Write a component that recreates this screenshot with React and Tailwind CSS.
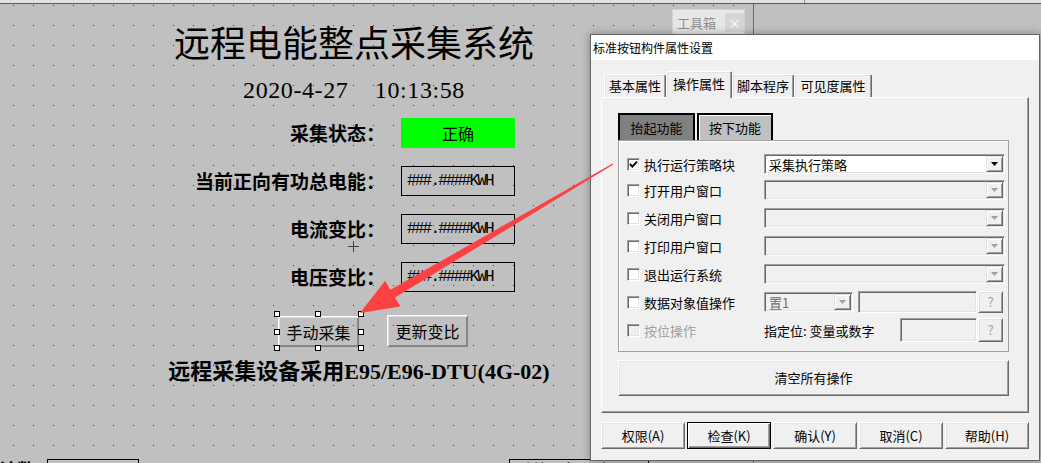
import React from "react";

const raised =
  "border border-t-white border-l-white border-r-[#696969] border-b-[#696969] shadow-[inset_1px_1px_0_#e3e3e3,inset_-1px_-1px_0_#a0a0a0]";
const sunken =
  "border border-t-[#a0a0a0] border-l-[#a0a0a0] border-r-white border-b-white shadow-[inset_1px_1px_0_#696969,inset_-1px_-1px_0_#e3e3e3]";
const dropRaised =
  "border border-t-[#e3e3e3] border-l-[#e3e3e3] border-r-[#696969] border-b-[#696969] shadow-[inset_1px_1px_0_#fff,inset_-1px_-1px_0_#a0a0a0]";
const canvasBtn =
  "border border-t-white border-l-white border-r-[#808080] border-b-[#808080] shadow-[inset_1px_1px_0_#dfdfdf,inset_-1px_-1px_0_#8a8a8a]";

function Dots() {
  return (
    <svg className="absolute inset-0 w-full h-full" aria-hidden="true">
      <defs>
        <pattern id="dotgrid" x="13" y="1" width="20" height="20" patternUnits="userSpaceOnUse">
          <rect x="0" y="0" width="1" height="1" fill="#3a3a3a" />
        </pattern>
      </defs>
      <rect width="100%" height="100%" fill="url(#dotgrid)" />
    </svg>
  );
}

function FormRow({ label, children }) {
  return (
    <div className="flex items-center h-[30px]">
      <div className="w-[385px] text-right text-[19px] font-bold leading-[30px] whitespace-nowrap">{label}</div>
      <div className="ml-[16px]">{children}</div>
    </div>
  );
}

function ValBox() {
  return (
    <div className="w-[114px] h-[30px] border border-black flex items-center pl-[5px] font-['Liberation_Mono',monospace] text-[16px] tracking-[-1.8px] whitespace-nowrap">
      ###.####KWH
    </div>
  );
}

function Handle({ pos }) {
  return <div className={"absolute w-[6px] h-[6px] bg-white border border-black " + pos} />;
}

function Canvas() {
  return (
    <div className="relative w-[754px] h-full border-r border-[#6a6a6a] overflow-hidden">
      <Dots />
      <div className="relative flex flex-col">
        <div className="mt-[17px] w-[708px] text-center text-[36px] leading-[40px] whitespace-nowrap">
          远程电能整点采集系统
        </div>
        <div className="mt-[14px] w-[708px] text-center text-[24px] leading-[30px] tracking-[0.6px] font-['Liberation_Serif',serif] whitespace-pre">
          2020-4-27    10:13:58
        </div>
        <div className="mt-[13px] flex flex-col gap-[18px]">
          <FormRow label="采集状态：">
            <div className="w-[114px] h-[30px] bg-[#00ff00] flex items-center justify-center text-[16px]">正确</div>
          </FormRow>
          <FormRow label="当前正向有功总电能：">
            <ValBox />
          </FormRow>
          <FormRow label="电流变比：">
            <ValBox />
          </FormRow>
          <FormRow label="电压变比：">
            <ValBox />
          </FormRow>
        </div>
        <div className="mt-[23px] flex items-start h-[32px]">
          <div className="relative ml-[278px] mt-[1px] w-[81px] h-[31px]">
            <div className={"w-full h-full flex items-center justify-center text-[16px] " + canvasBtn}>手动采集</div>
            <Handle pos="left-[-4px] top-[-5px]" />
            <Handle pos="left-[37px] top-[-5px]" />
            <Handle pos="left-[80px] top-[-5px]" />
            <Handle pos="left-[-4px] top-[13px]" />
            <Handle pos="left-[80px] top-[13px]" />
            <Handle pos="left-[-4px] top-[29px]" />
            <Handle pos="left-[37px] top-[29px]" />
            <Handle pos="left-[80px] top-[29px]" />
          </div>
          <div className={"ml-[28px] w-[81px] h-[32px] flex items-center justify-center text-[16px] " + canvasBtn}>
            更新变比
          </div>
        </div>
        <div className="mt-[10px] w-[718px] text-center text-[22px] leading-[30px] font-bold font-['Liberation_Serif','Noto_Sans_CJK_SC',serif] whitespace-nowrap">
          远程采集设备采用E95/E96-DTU(4G-02)
        </div>
        <div className="mt-[72px] flex items-start">
          <div className="ml-[-1px] mt-[-5px] w-[37px] text-[18px] font-bold leading-[30px] whitespace-nowrap">计数</div>
          <div className="ml-[11px] w-[92px] h-[30px] border border-black" />
          <div className="ml-[370px] w-[140px] h-[30px] border border-black pl-[6px] text-[16px] leading-[18px] whitespace-nowrap">
            系统运行日志
          </div>
        </div>
      </div>
      <svg className="absolute left-[348px] top-[237px]" width="11" height="11" viewBox="0 0 11 11">
        <path d="M5.5 0V11M0 5.5H11" stroke="#404040" strokeWidth="1" />
      </svg>
    </div>
  );
}

function Toolbox() {
  return (
    <div className="absolute left-[672px] top-[9px] w-[73px] h-[28px] bg-[#e7e7e7] border border-[#d3d3d3] flex items-start text-[13px] text-[#8e8e8e]">
      <div className="h-[25px] flex items-center pl-[4px] leading-none">工具箱</div>
      <div className="ml-auto mt-[3px] w-[19px] h-[19px] bg-[#d6d6d6] flex items-center justify-center text-white text-[13px] leading-none">
        ×
      </div>
    </div>
  );
}

function Tri({ color }) {
  return (
    <svg width="7" height="4" viewBox="0 0 7 4">
      <path d="M0 0H7L3.5 4Z" fill={color} />
    </svg>
  );
}

function Select({ size, text, active, textClass }) {
  return (
    <div className={"flex p-[1px] shrink-0 " + sunken + " " + size}>
      <div
        className={
          "flex-1 flex items-center pl-[3px] leading-none whitespace-nowrap " +
          (active ? "bg-white" : "bg-[#f0f0f0]") +
          " " +
          (textClass || "")
        }
      >
        {text}
      </div>
      <div className={"w-[17px] h-full flex items-center justify-center bg-[#f0f0f0] " + dropRaised}>
        <Tri color={active ? "#000" : "#a0a0a0"} />
      </div>
    </div>
  );
}

function Check({ checked, disabled }) {
  return (
    <span className={"relative block shrink-0 w-[13px] h-[13px] " + sunken + (disabled ? " bg-[#f0f0f0]" : " bg-white")}>
      {checked && (
        <svg className="absolute left-0 top-0" width="11" height="11" viewBox="0 0 11 11">
          <path d="M2 5L4.3 7.6L9 2.6" fill="none" stroke="#000" strokeWidth="1.9" />
        </svg>
      )}
    </span>
  );
}

function Row({ h, checked, disabled, label, children }) {
  return (
    <div className={"flex items-center " + h}>
      <div className="w-[137px] flex items-center gap-[4px]">
        <Check checked={checked} disabled={disabled} />
        <span className={"whitespace-nowrap leading-none " + (disabled ? "text-[#a0a0a0]" : "")}>{label}</span>
      </div>
      {children}
    </div>
  );
}

function QBtn({ size }) {
  return (
    <div className={"ml-[1px] w-[25px] flex items-center justify-center bg-[#f0f0f0] text-[#a0a0a0] " + raised + " " + size}>?</div>
  );
}

function Tab({ w, active, children }) {
  return (
    <div
      className={
        "flex items-center justify-center border-t border-l border-r border-t-white border-l-white border-r-[#696969] rounded-t-[2px] bg-[#f0f0f0] shadow-[inset_-1px_0_0_#a0a0a0,inset_1px_1px_0_#e3e3e3] whitespace-nowrap " +
        w +
        (active ? " h-[27px] mb-[-1px] relative z-10 pb-[3px]" : " h-[23px]")
      }
    >
      {children}
    </div>
  );
}

function Dialog() {
  const buttons = ["权限(A)", "检查(K)", "确认(Y)", "取消(C)", "帮助(H)"];
  return (
    <div className="absolute left-[590px] top-[34px] w-[450px] h-[427px] border border-[#646464] bg-[#f0f0f0] shadow-[0_0_8px_rgba(0,0,0,0.35)] text-[13px] text-black flex flex-col">
      <div className="h-[25px] shrink-0 bg-white flex items-center pl-[2px] text-[12px] whitespace-nowrap">
        标准按钮构件属性设置
      </div>
      <div className="mt-[11px] shrink-0 flex items-end h-[26px] pl-[13px] relative z-10">
        <Tab w="w-[62px]">基本属性</Tab>
        <Tab w="w-[66px]" active>
          操作属性
        </Tab>
        <Tab w="w-[62px]">脚本程序</Tab>
        <Tab w="w-[78px]">可见度属性</Tab>
      </div>
      <div className="ml-[10px] w-[428px] h-[316px] shrink-0 border border-t-white border-l-white border-r-[#696969] border-b-[#696969] shadow-[inset_-1px_-1px_0_#a0a0a0] pt-[15px] pl-[16px] flex flex-col">
        <div className="flex gap-[2px] h-[27px] shrink-0">
          <div className="w-[77px] h-full border-2 border-b-0 border-black bg-[#808080] flex items-center justify-center">
            抬起功能
          </div>
          <div className="w-[76px] h-full border-2 border-b-0 border-black bg-[#c0c0c0] shadow-[inset_1px_1px_0_#fff] flex items-center justify-center">
            按下功能
          </div>
        </div>
        <div className="w-[391px] h-[212px] shrink-0 border border-[#a0a0a0] shadow-[inset_1px_1px_0_#fff] pt-[11px] pl-[8px] flex flex-col">
          <Row h="h-[24px]" checked label="执行运行策略块">
            <Select size="w-[241px] h-[20px]" text="采集执行策略" active />
          </Row>
          <Row h="h-[28px]" label="打开用户窗口">
            <Select size="w-[241px] h-[20px]" text="" />
          </Row>
          <Row h="h-[28px]" label="关闭用户窗口">
            <Select size="w-[241px] h-[20px]" text="" />
          </Row>
          <Row h="h-[28px]" label="打印用户窗口">
            <Select size="w-[241px] h-[20px]" text="" />
          </Row>
          <Row h="h-[28px]" label="退出运行系统">
            <Select size="w-[241px] h-[20px]" text="" />
          </Row>
          <Row h="h-[28px]" label="数据对象值操作">
            <Select size="w-[89px] h-[20px]" text="置1" textClass="text-[#6d6d6d]" />
            <div className={"ml-[5px] w-[119px] h-[22px] bg-[#f0f0f0] " + sunken} />
            <QBtn size="h-[22px]" />
          </Row>
          <Row h="h-[28px]" disabled label="按位操作">
            <span className="w-[136px] whitespace-nowrap leading-none">指定位: 变量或数字</span>
            <div className={"w-[77px] h-[24px] bg-[#f0f0f0] " + sunken} />
            <QBtn size="h-[24px]" />
          </Row>
        </div>
        <div className={"mt-[8px] w-[391px] h-[36px] shrink-0 flex items-center justify-center " + raised}>清空所有操作</div>
      </div>
      <div className="mt-[9px] ml-[10px] flex gap-[2px]">
        {buttons.map((b) => (
          <div
            key={b}
            className={
              "w-[84px] h-[27px] flex items-center justify-center whitespace-nowrap " +
              (b === "检查(K)"
                ? "border border-black shadow-[inset_1px_1px_0_#fff,inset_-1px_-1px_0_#696969,inset_-2px_-2px_0_#a0a0a0]"
                : raised)
            }
          >
            {b}
          </div>
        ))}
      </div>
    </div>
  );
}

function Arrow() {
  return (
    <svg className="absolute left-0 top-0 pointer-events-none" width="1041" height="463" viewBox="0 0 1041 463">
      <polygon
        points="612.7,163.5 390.4,289.8 385.1,280.8 360,313 400.3,306.6 395,297.6 613.3,164.5"
        fill="#fb4141"
      />
    </svg>
  );
}

export default function App() {
  return (
    <div className="relative w-[1041px] h-[463px] overflow-hidden bg-[#c0c0c0] font-['Noto_Sans_CJK_SC',sans-serif] text-black">
      <div className="flex h-[3px] bg-[#e1e1e1]">
        <div className="ml-[804px] w-px bg-[#8a8a8a]" />
      </div>
      <div className="h-px bg-[#5a5a5a]" />
      <div className="flex h-[459px]">
        <Canvas />
        <div className="flex-1 bg-[#c0c0c0]" />
      </div>
      <Toolbox />
      <Dialog />
      <Arrow />
    </div>
  );
}
